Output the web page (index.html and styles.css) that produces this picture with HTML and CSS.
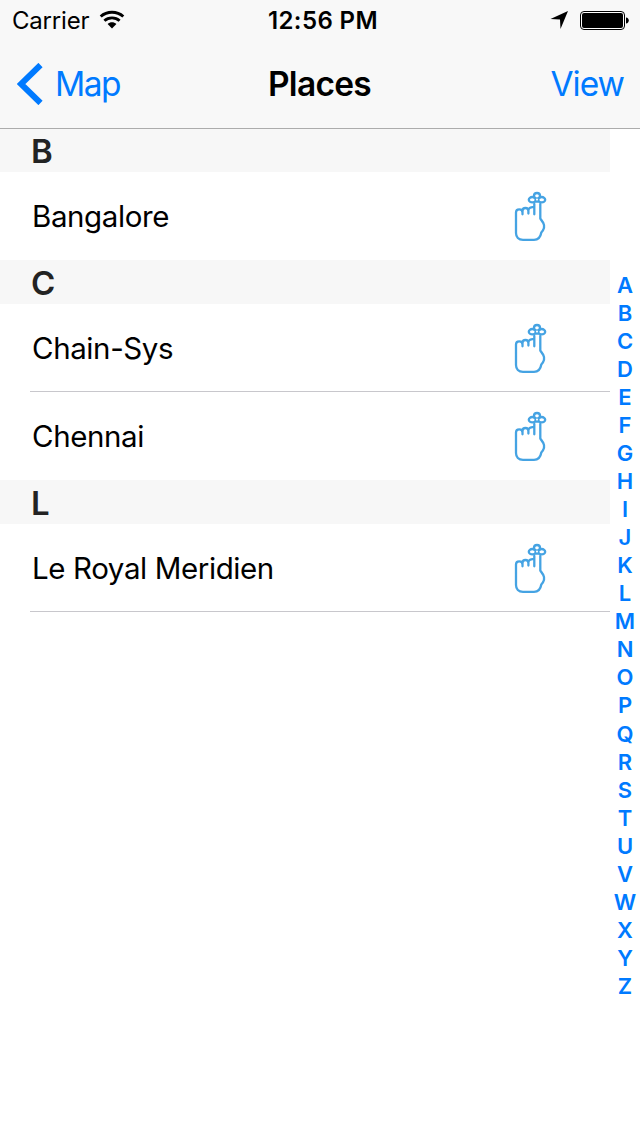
FILE: index.html
```
<!DOCTYPE html>
<html lang="en">
<head>
<meta charset="utf-8">
<title>Places</title>
<link rel="stylesheet" href="styles.css">
</head>
<body>
<svg class="symbols" aria-hidden="true">
  <symbol id="hand" viewBox="0 0 36 52">
    <g fill="none" stroke="#45a3e3" stroke-width="2.300" stroke-linecap="round" stroke-linejoin="round">
      <path d="M22.300 14V24.300M28.300 14V28.500L31.300 33C32.600 35.500 32 39.500 29.300 42.500C28.500 47.500 26 49.800 22 49.800H11C6.500 49.800 4 47 4 43V22.500C4 18.300 10.500 18.300 10.500 22.500V24.300M10.500 22.500V21C10.500 17 16.400 17 16.400 21V23.500M16.400 20.500C16.400 17.700 19 16.800 22 17.200"/>
      <ellipse cx="25" cy="5.800" rx="3" ry="2.800"/>
      <ellipse cx="20.300" cy="9.700" rx="3.500" ry="2.700"/>
      <ellipse cx="29.700" cy="9.700" rx="3.500" ry="2.700"/>
      <path d="M23.500 11.600H26.500"/>
    </g>
    <circle cx="25" cy="9.500" r="1" fill="#fff"/>
  </symbol>
</svg>
<div class="screen">
  <header class="topbar">
    <div class="status">
      <div class="side">
        <span class="carrier">Carrier</span>
        <svg class="wifi" width="26" height="20" viewBox="0 0 26 20"><g fill="none" stroke="#000" stroke-width="2.900"><path d="M1.700 6.500C8 .8 18 .8 24.300 6.500"/><path d="M5.400 10.800C9.600 6.900 16.400 6.900 20.600 10.800"/></g><path d="M8.600 14C11 11.800 15 11.800 17.400 14L13 18.400Z"/></svg>
      </div>
      <span class="clock">12:56 PM</span>
      <div class="side end">
        <svg class="location" width="18" height="18" viewBox="0 0 18 18"><path d="M18 0 10.500 18 10 8.500 .5 8Z"/></svg>
        <svg class="battery" width="49" height="19" viewBox="0 0 49 19"><rect x=".5" y=".5" width="44" height="18" rx="3.500" fill="#fff" stroke="#000"/><rect x="2" y="2" width="41" height="15" rx="2"/><path d="M46 6.500C49.700 6.500 49.700 12.500 46 12.500Z"/></svg>
      </div>
    </div>
    <nav class="nav">
      <a class="side back"><svg class="chevron" width="26" height="42" viewBox="0 0 26 42"><path d="M23.500 2 4 21 23.500 40" fill="none" stroke="#007aff" stroke-width="6"/></svg><span class="map">Map</span></a>
      <h1 class="title">Places</h1>
      <a class="side end"><span class="view">View</span></a>
    </nav>
  </header>
  <div class="content">
    <main class="list">
      <h2 class="section">B</h2>
      <div class="row"><span>Bangalore</span><svg class="hand"><use href="#hand"/></svg></div>
      <h2 class="section">C</h2>
      <div class="row line"><span>Chain-Sys</span><svg class="hand"><use href="#hand"/></svg></div>
      <div class="row"><span>Chennai</span><svg class="hand"><use href="#hand"/></svg></div>
      <h2 class="section">L</h2>
      <div class="row line"><span>Le Royal Meridien</span><svg class="hand"><use href="#hand"/></svg></div>
    </main>
    <aside class="index">
      <span>A</span><span>B</span><span>C</span><span>D</span><span>E</span><span>F</span><span>G</span><span>H</span><span>I</span><span>J</span><span>K</span><span>L</span><span>M</span><span>N</span><span>O</span><span>P</span><span>Q</span><span>R</span><span>S</span><span>T</span><span>U</span><span>V</span><span>W</span><span>X</span><span>Y</span><span>Z</span>
    </aside>
  </div>
</div>
</body>
</html>
```
FILE: styles.css
```
* { box-sizing: border-box; }
body { margin: 0; background: #fff; color: #000; font-family: Inter, "Liberation Sans", sans-serif; }
.symbols { display: none; }
.screen { width: 640px; height: 1136px; overflow: hidden; display: flex; flex-direction: column; background: #fff; }
.topbar { height: 129px; background: #f8f8f8; border-bottom: 1px solid #acacac; }
.status { height: 40px; display: flex; align-items: center; padding: 0 11px 0 12px; font-size: 24px; line-height: 40px; }
.status span { padding-top: 1px; }
.side { flex: 1 1 0; display: flex; align-items: center; }
.end { justify-content: flex-end; }
.carrier { letter-spacing: -0.2px; }
.wifi { margin-left: 10px; }
.clock { font-weight: 570; letter-spacing: 0.4px; padding-left: 5px; }
.location { margin-right: 12px; }
.nav { height: 88px; display: flex; align-items: center; padding: 0 16px 0 17px; font-size: 33.5px; line-height: 88px; }
.nav a { color: #007aff; }
.back { gap: 12px; }
.map { letter-spacing: -1.5px; }
.title { margin: 0; padding-right: 2px; font-size: 33.5px; font-weight: 600; letter-spacing: -0.7px; }
.view { letter-spacing: -1px; }
.content { flex: 1; display: flex; }
.list { width: 610px; }
.section { margin: 0; height: 44px; padding-left: 31px; background: #f7f7f7; color: #232323; font-size: 33px; font-weight: 600; line-height: 46px; }
.section:first-child { height: 43px; line-height: 44px; }
.row { height: 88px; margin-left: 30px; padding: 0 62px 0 2px; display: flex; align-items: center; justify-content: space-between; font-size: 29.5px; line-height: 88px; }
.row span { letter-spacing: -0.4px; }
.line { box-shadow: inset 0 -1px #c8c7cc; }
.hand { width: 36px; height: 52px; }
.index { width: 30px; padding-top: 142px; display: flex; flex-direction: column; align-items: center; color: #007aff; font-size: 22px; font-weight: 570; line-height: 28.040px; }
.index span { height: 28.040px; }
```
